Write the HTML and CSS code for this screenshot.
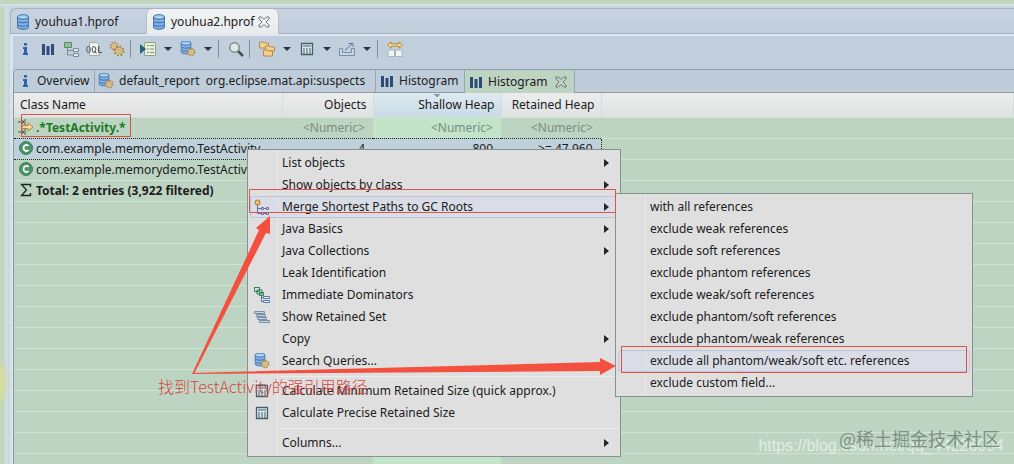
FILE: index.html
```html
<!DOCTYPE html>
<html lang="en">
<head>
  <meta charset="UTF-8">
  <meta name="viewport" content="width=device-width, initial-scale=1.0">
  <title>youhua2.hprof - Memory Analyzer</title>
  <link rel="stylesheet" href="styles.css">
</head>
<body>
  <!-- shared icons -->
  <svg class="sprite" aria-hidden="true">
    <symbol id="db" viewBox="0 0 16 16">
      <g stroke="#3a6ea8" fill="#7fb2e6">
        <path d="M2.500 11v2c0 3 11 3 11 0v-2"/>
        <path d="M2.500 7.500v2.500c0 3 11 3 11 0V7.500"/>
        <path d="M2.500 3v3.500c0 3 11 3 11 0V3"/>
        <ellipse cx="8" cy="3" rx="5.500" ry="2.300" fill="#a5d2f5"/>
      </g>
    </symbol>
    <symbol id="gear" viewBox="0 0 16 16">
      <circle cx="8" cy="8" r="6" fill="none" stroke="#a98449" stroke-width="2.500" stroke-dasharray="2.400 2.300"/>
      <circle cx="8" cy="8" r="4.500" fill="#f3d596" stroke="#b08a4c"/>
      <circle cx="8" cy="8" r="1.800" fill="#f4f4ee" stroke="#a07a3e"/>
    </symbol>
    <symbol id="dbgear" viewBox="0 0 18 16">
      <use href="#db" x="0" y="-1" width="14" height="15"/>
      <use href="#gear" x="7" y="6" width="10" height="10"/>
    </symbol>
    <symbol id="info" viewBox="0 0 16 16">
      <path d="M7 2h3v2.500H7zM6 6h4v6h1v2H6v-2h1V8H6z" fill="#2a66ad"/>
    </symbol>
    <symbol id="bars" viewBox="0 0 16 16">
      <path d="M2 3h3v11H2zM6.500 5h3v9h-3zM11 3h3v11h-3z" fill="#2d4a78"/>
    </symbol>
    <symbol id="calc" viewBox="0 0 16 16">
      <path d="M2.500 2.500h11v11h-11z" fill="#dfe8ec" stroke="#44606a" stroke-width="1.300"/>
      <path d="M4 5h8" stroke="#8ba7b4" stroke-width="2"/>
      <path d="M4 8h8M4 10h8M4 12h8" stroke="#44606a" stroke-dasharray="2 1"/>
    </symbol>
    <symbol id="close" viewBox="0 0 12 12">
      <path d="M1 1h2.500L6 3.500 8.500 1H11v2L8 6l3 3v2H8.500L6 8.500 3.500 11H1V9l3-3-3-3z" fill="none" stroke="#6d7477"/>
    </symbol>
    <symbol id="class" viewBox="0 0 16 16">
      <circle cx="8" cy="8" r="6.500" fill="#4b9469" stroke="#3d7f59"/>
      <path d="M10.500 6C9 4 5.500 4.800 5.500 8s3.500 4 5 2" fill="none" stroke="#fff" stroke-width="1.800"/>
    </symbol>
    <symbol id="tree" viewBox="0 0 16 16">
      <path d="M4.500 7v7H10M5 9.500h5" fill="none" stroke="#7c8d99"/>
      <path d="M1.500 1.500h7v5h-7z" fill="#8dc394" stroke="#5b8a66"/>
      <path d="M10.500 7.500h5v3h-5zM10.500 12.500h5v3h-5z" fill="#e1e8ec" stroke="#7c8c9c"/>
    </symbol>
  </svg>

  <main class="editor">
    <nav class="fileTabs">
      <button class="fileTab"><svg class="icon"><use href="#db"/></svg>youhua1.hprof</button>
      <button class="fileTab active"><svg class="icon"><use href="#db"/></svg>youhua2.hprof<svg class="closeIcon"><use href="#close"/></svg></button>
    </nav>

    <section class="pane">
      <div class="toolbar">
        <button class="toolBtn" aria-label="Overview"><svg class="icon"><use href="#info"/></svg></button>
        <button class="toolBtn" aria-label="Histogram"><svg class="icon"><use href="#bars"/></svg></button>
        <button class="toolBtn" aria-label="Dominator tree"><svg class="icon"><use href="#tree"/></svg></button>
        <button class="toolBtn" aria-label="OQL">
          <svg class="icon" viewBox="0 0 16 16">
            <path d="M3.500 1.500h7l3 3v10h-10z" fill="#eef1ec" stroke="#a4aaa4"/>
            <g fill="none" stroke="#4c5560"><ellipse cx="2.500" cy="8.500" rx="1.800" ry="3"/><ellipse cx="8" cy="8.500" rx="1.800" ry="3"/><path d="M8.500 10l2 2.500M12.500 5v6.500H16"/></g>
          </svg>
        </button>
        <button class="toolBtn" aria-label="Thread overview">
          <svg class="icon" viewBox="0 0 16 16"><use href="#gear" x="0" y="0" width="10" height="10"/><use href="#gear" x="4" y="4" width="12" height="12"/></svg>
        </button>
        <span class="divider"></span>
        <button class="toolBtn" aria-label="Run expert system test">
          <svg class="icon" viewBox="0 0 16 16">
            <path d="M4.500 1.500h11v13h-11z" fill="#e8f0dc" stroke="#8fa38b"/>
            <path d="M7 4.500h2M7 8h2M7 11.500h2M10 4.500h4M10 8h4M10 11.500h4" stroke="#7b977b"/>
            <path d="M0 3l6 5-6 5z" fill="#236477"/>
          </svg>
        </button>
        <button class="caretBtn" aria-label="More tests"></button>
        <button class="toolBtn" aria-label="Query browser"><svg class="icon wide"><use href="#dbgear"/></svg></button>
        <button class="caretBtn" aria-label="More queries"></button>
        <span class="divider"></span>
        <button class="toolBtn" aria-label="Search">
          <svg class="icon" viewBox="0 0 16 16">
            <path d="M10 10l5 5" stroke="#465058" stroke-width="2.500"/>
            <circle cx="6.500" cy="6.500" r="4.700" fill="#dcebe8" stroke="#7f898e" stroke-width="1.500"/>
          </svg>
        </button>
        <span class="divider"></span>
        <button class="toolBtn" aria-label="Group result">
          <svg class="icon" viewBox="0 0 16 16" fill="#f3d08c" stroke="#b58a48">
            <path d="M.5 2.500V1h4l1 1h4v5h-9z"/><path d="M6.500 6.500V5h4l1 1h4v4h-9z"/><path d="M4.500 10.500V9h4l1 1h4v5h-9z"/>
          </svg>
        </button>
        <button class="caretBtn" aria-label="Group options"></button>
        <button class="toolBtn" aria-label="Calculate retained size"><svg class="icon"><use href="#calc"/></svg></button>
        <button class="caretBtn" aria-label="Calculate options"></button>
        <button class="toolBtn" aria-label="Export">
          <svg class="icon" viewBox="0 0 16 16">
            <path d="M.5 7.500h3v4h9v-4h3v7H.5z" fill="#c7d6e7" stroke="#7b90a8"/>
            <path d="M6 9l7-6M9.500 2.500H14V6" fill="none" stroke="#5d799c"/>
          </svg>
        </button>
        <button class="caretBtn" aria-label="Export options"></button>
        <span class="divider"></span>
        <button class="toolBtn" aria-label="Compare">
          <svg class="icon" viewBox="0 0 16 16">
            <path d="M.5 4L4 .8v2h8v-2L15.500 4 12 7.200v-2H4v2z" fill="#f6dc96" stroke="#b5853a"/>
            <path d="M1 9h6.500v6.500H1zM8.500 9H15v6.500H8.500z" fill="#f3f5f5" stroke="#a6b4c1"/>
          </svg>
        </button>
      </div>

      <div class="result">
        <nav class="viewTabs">
          <button class="viewTab"><svg class="icon"><use href="#info"/></svg>Overview</button>
          <button class="viewTab report"><svg class="icon wide"><use href="#dbgear"/></svg>default_report&nbsp; org.eclipse.mat.api:suspects</button>
          <button class="viewTab"><svg class="icon"><use href="#bars"/></svg>Histogram</button>
          <button class="viewTab active"><svg class="icon"><use href="#bars"/></svg>Histogram<svg class="closeIcon"><use href="#close"/></svg></button>
        </nav>

        <table class="histogram">
          <colgroup>
            <col class="colName"><col class="colObjects"><col class="colShallow"><col class="colRetained"><col>
          </colgroup>
          <thead>
            <tr><th class="name">Class Name</th><th>Objects</th><th class="sorted">Shallow Heap</th><th>Retained Heap</th><th></th></tr>
          </thead>
          <tbody>
            <tr class="filter">
              <td class="name">
                <svg class="icon" viewBox="0 0 16 16"><path d="M0 3h6M4 1l2 2-2 2M7 0v6M0 13h6M4 11l2 2-2 2M7 10v6" fill="none" stroke="#4f5650"/><path d="M4 6.500h6V4l5 4-5 4V9.500H4z" fill="#f5d995" stroke="#b08338"/></svg>.*TestActivity.*
              </td>
              <td>&lt;Numeric&gt;</td><td>&lt;Numeric&gt;</td><td>&lt;Numeric&gt;</td><td></td>
            </tr>
            <tr class="selected">
              <td class="name"><svg class="icon"><use href="#class"/></svg>com.example.memorydemo.TestActivity</td>
              <td>4</td><td>800</td><td>&gt;= 47,960</td><td></td>
            </tr>
            <tr>
              <td class="name"><svg class="icon"><use href="#class"/></svg>com.example.memorydemo.TestActivity</td>
              <td></td><td></td><td></td><td></td>
            </tr>
            <tr class="total">
              <td class="name"><svg class="icon" viewBox="0 0 16 16"><path d="M12.500 5V2.500h-9L8.500 8l-5 5.500h9V11" fill="none" stroke="#1c241e" stroke-width="1.300"/></svg>Total: 2 entries (3,922 filtered)</td>
              <td></td><td></td><td></td><td></td>
            </tr>
            <tr><td></td><td></td><td></td><td></td><td></td></tr>
            <tr><td></td><td></td><td></td><td></td><td></td></tr>
            <tr><td></td><td></td><td></td><td></td><td></td></tr>
            <tr><td></td><td></td><td></td><td></td><td></td></tr>
            <tr><td></td><td></td><td></td><td></td><td></td></tr>
            <tr><td></td><td></td><td></td><td></td><td></td></tr>
            <tr><td></td><td></td><td></td><td></td><td></td></tr>
            <tr><td></td><td></td><td></td><td></td><td></td></tr>
            <tr><td></td><td></td><td></td><td></td><td></td></tr>
            <tr><td></td><td></td><td></td><td></td><td></td></tr>
            <tr><td></td><td></td><td></td><td></td><td></td></tr>
            <tr><td></td><td></td><td></td><td></td><td></td></tr>
            <tr><td></td><td></td><td></td><td></td><td></td></tr>
          </tbody>
        </table>
      </div>
    </section>
  </main>

  <p class="watermark blog">https://blog.csdn.net/qq_44226094</p>
  <p class="watermark site">@稀土掘金技术社区</p>

  <div class="menu contextMenu">
    <button class="menuItem sub">List objects</button>
    <button class="menuItem sub">Show objects by class</button>
    <button class="menuItem sub hover">
      <svg class="icon" viewBox="0 0 16 16"><path d="M3.500 5v9.500H8M4 9.500h4M10 9.500h3M10 14.500h3" fill="none" stroke="#656ba5"/><circle cx="3.500" cy="3.500" r="2.500" fill="#f7c262" stroke="#a97325"/><path d="M7.500 8.500h2v2h-2zM12.500 8.500h2v2h-2zM7.500 13.500h2v2h-2zM12.500 13.500h2v2h-2z" fill="#dfe0f2" stroke="#656ba5"/></svg>
      Merge Shortest Paths to GC Roots
    </button>
    <button class="menuItem sub">Java Basics</button>
    <button class="menuItem sub">Java Collections</button>
    <button class="menuItem">Leak Identification</button>
    <button class="menuItem">
      <svg class="icon" viewBox="0 0 16 16"><path d="M.5.5h5v4h-5zM3 3h5v4H3zM5.500 5.500h4v3h-4z" fill="#d3eadb" stroke="#35785a"/><path d="M7.500 9v5.500H10M8 10.500h2" fill="none" stroke="#5a7893"/><path d="M9.500 9.500h6v2h-6zM9.500 13.500h6v2h-6z" fill="#e7edf3" stroke="#5a7ba5"/></svg>
      Immediate Dominators
    </button>
    <button class="menuItem">
      <svg class="icon" viewBox="0 0 16 16" fill="#c5d1df" stroke="#7c8fa8"><path d="M.5 2.500h10v2H.5zM2.500 5.500h9v2h-9zM3.500 8.500h9v2h-9zM5.500 11.500h10v2h-10z"/></svg>
      Show Retained Set
    </button>
    <button class="menuItem sub">Copy</button>
    <button class="menuItem"><svg class="icon"><use href="#dbgear"/></svg>Search Queries...</button>
    <hr>
    <button class="menuItem"><svg class="icon"><use href="#calc"/></svg>Calculate Minimum Retained Size (quick approx.)</button>
    <button class="menuItem"><svg class="icon"><use href="#calc"/></svg>Calculate Precise Retained Size</button>
    <hr>
    <button class="menuItem sub">Columns...</button>
  </div>

  <div class="menu subMenu">
    <button class="menuItem">with all references</button>
    <button class="menuItem">exclude weak references</button>
    <button class="menuItem">exclude soft references</button>
    <button class="menuItem">exclude phantom references</button>
    <button class="menuItem">exclude weak/soft references</button>
    <button class="menuItem">exclude phantom/soft references</button>
    <button class="menuItem">exclude phantom/weak references</button>
    <button class="menuItem hover">exclude all phantom/weak/soft etc. references</button>
    <button class="menuItem">exclude custom field...</button>
  </div>

  <!-- annotations drawn over the window -->
  <svg class="marks" width="1014" height="464" aria-hidden="true">
    <g fill="none" stroke="#d9534b">
      <path d="M21.500 114.500h109v22h-109z"/>
      <path d="M249.500 189.500h366v23h-366z"/>
      <path d="M621.500 346.500h345v26h-345z"/>
    </g>
    <g fill="#f4503f">
      <path d="M192 374L259 230L256 228L270 216V234L266 233L194 374z"/>
      <path d="M193 373L600 362V358L616 366L600 375V371L193 374z"/>
    </g>
  </svg>
  <p class="note">找到TestActivity的强引用路径</p>
</body>
</html>
```
FILE: styles.css
```css
body {
  position: relative;
  height: 100vh;
  margin: 0;
  overflow: hidden;
  background-color: #c1d5bf;
  color: #1b2022;
  font: 12px/20px "Noto Sans", "Noto Sans CJK SC", sans-serif;
}

button {
  border: 0;
  padding: 0;
  background: transparent;
  color: inherit;
  font: inherit;
  white-space: nowrap;
}

p {
  margin: 0;
}

.sprite {
  position: absolute;
  width: 0;
  height: 0;
}

.icon {
  flex: none;
  width: 16px;
  height: 16px;
}

.icon.wide {
  width: 18px;
}

.closeIcon {
  width: 12px;
  height: 12px;
}

/* green desktop edge, then the light window frame */
.editor {
  display: flex;
  flex-direction: column;
  box-sizing: border-box;
  height: 100%;
  padding: 8px 0 0 10px;
  background: linear-gradient(#c1d5bf 4px, #dde8e4 4px, #c8d8dc 6px, transparent 8px),
    radial-gradient(ellipse 8px 24px at 0 383px, #d3dda4 60%, transparent),
    linear-gradient(90deg, #c1d5bf 4px, #d3e0de 6px, #c5d4e0 10px);
}

/* top row of tabs, one per heap dump */
.fileTabs {
  display: flex;
  height: 24px;
  border: 1px solid #a3b2c6;
  border-right: 0;
  border-top-left-radius: 6px;
  background: linear-gradient(#c9d3e0, #c0cedc);
}

.fileTab {
  display: flex;
  align-items: center;
  gap: 4px;
  width: 135px;
  height: 26px;
  padding-left: 4px;
}

.fileTab.active {
  width: 133px;
  border: 1px solid #b3bec9;
  border-width: 0 1px;
  border-radius: 6px 6px 0 0;
  background: linear-gradient(#f0f1f1, #e8ebee);
}

.pane {
  display: flex;
  flex: 1;
  flex-direction: column;
  min-height: 0;
  border-top: 2px solid #dfe7ef;
  border-left: 3px solid #d8e3ec;
  background-color: #c1cedb;
}

.toolbar {
  display: flex;
  align-items: center;
  height: 26px;
  padding-bottom: 7px;
}

.toolBtn {
  display: flex;
  justify-content: center;
  width: 23px;
}

.caretBtn {
  width: 17px;
}

.caretBtn::after {
  content: "";
  display: block;
  width: 0;
  margin: auto;
  border: 4px solid transparent;
  border-top-color: #2b3442;
  border-bottom: 0;
}

.divider {
  width: 5px;
  height: 18px;
  margin-left: 2px;
  border-left: 1px solid #8493a3;
}

.result {
  flex: 1;
  min-height: 0;
  overflow: hidden;
  border-top: 1px solid #8d9eb0;
  border-left: 1px solid #8a9a9c;
  border-top-left-radius: 4px;
}

.viewTabs {
  display: flex;
  height: 22px;
  border-bottom: 1px solid #8d9ba6;
  background-color: #bfcdda;
}

.viewTab {
  display: flex;
  align-items: center;
  gap: 4px;
  box-sizing: border-box;
  min-width: 81px;
  padding: 0 4px 0 3px;
  border-right: 1px solid #98a7b5;
}

.viewTab + .viewTab {
  min-width: 89px;
}

.viewTab.report {
  min-width: 281px;
  padding-left: 2px;
}

.viewTab.active {
  min-width: 110px;
  height: 23px;
  background-color: #bdd4c2;
}

.viewTab .closeIcon {
  margin-left: 4px;
}

.histogram {
  width: 100%;
  table-layout: fixed;
  border-collapse: collapse;
  background-color: #bdd4c2;
}

.colName { width: 268px; }
.colObjects { width: 91px; }
.colShallow { width: 128px; background-color: #c3e4c9; }
.colRetained { width: 100px; }

.histogram th,
.histogram td {
  box-sizing: border-box;
  height: 21px;
  padding: 0 8px 0 0;
  border-bottom: 1px solid #d0e4d3;
  line-height: 20px;
  text-align: right;
  white-space: nowrap;
}

.histogram th {
  height: 24px;
  padding-right: 6px;
  border-right: 1px solid #d6dcdc;
  background: linear-gradient(#ececec, #dfe2e2);
  font-weight: normal;
}

/* small sort mark on the upper edge */
.histogram th.sorted {
  background: conic-gradient(from -45deg at 50% 100%, #8e9aa2 90deg, transparent 90deg) 50% 1px / 8px 4px no-repeat,
    linear-gradient(#dde9ef, #c8dbe6);
}

.histogram .name {
  padding-left: 4px;
  text-align: left;
}

.histogram th.name {
  padding-left: 6px;
}

.histogram .name .icon {
  margin-right: 2px;
  vertical-align: -3px;
}

.filter {
  color: #7c8c80;
}

.filter td:not(:last-child) {
  border-bottom: 0;
}

.filter .name {
  color: #1c7a25;
  font-weight: bold;
}

.histogram .selected td:not(:last-child) {
  border-top: 1px dotted #20282c;
  border-bottom: 1px dotted #20282c;
  background-color: #bfd1da;
}

.histogram .selected td:nth-child(4) {
  border-right: 1px dotted #20282c;
}

.total {
  font-weight: bold;
}

.menu {
  position: absolute;
  box-sizing: border-box;
  padding: 2px;
  border: 1px solid #87928b;
  background: linear-gradient(90deg, transparent 29px, #e9e9e9 29px, #e9e9e9 30px, transparent 30px) #dfdfdf;
}

.contextMenu {
  top: 149px;
  left: 247px;
  width: 374px;
}

.subMenu {
  top: 193px;
  left: 615px;
  width: 358px;
}

.menuItem {
  display: flex;
  align-items: center;
  box-sizing: border-box;
  width: 100%;
  height: 22px;
  padding-left: 32px;
}

.menuItem .icon {
  width: 18px;
  margin: 0 11px 0 -29px;
}

.menuItem.hover {
  border-radius: 3px;
  background-color: rgba(215, 219, 231, 0.7);
  box-shadow: inset 0 0 0 1px #b9c6da;
}

.menuItem.sub::after {
  content: "";
  margin: 0 9px 0 auto;
  border: 4px solid transparent;
  border-left: 5px solid #202628;
  border-right: 0;
}

.menu hr {
  height: 1px;
  margin: 4px 0 3px 30px;
  border: 0;
  background-color: #ededed;
}

.marks {
  position: absolute;
  top: 0;
  left: 0;
}

.note {
  position: absolute;
  top: 374px;
  left: 158px;
  color: #d8453f;
  font: 16px/24px "Noto Sans CJK SC", sans-serif;
  font-weight: 300;
}

.watermark {
  position: absolute;
  white-space: nowrap;
}

.blog {
  right: 10px;
  bottom: 6px;
  color: rgba(235, 244, 238, 0.8);
  font: 16px/24px "Liberation Sans", sans-serif;
}

.site {
  right: 14px;
  bottom: 14px;
  color: #7d9083;
  font: 18px/24px "Noto Sans CJK SC", sans-serif;
}
```
